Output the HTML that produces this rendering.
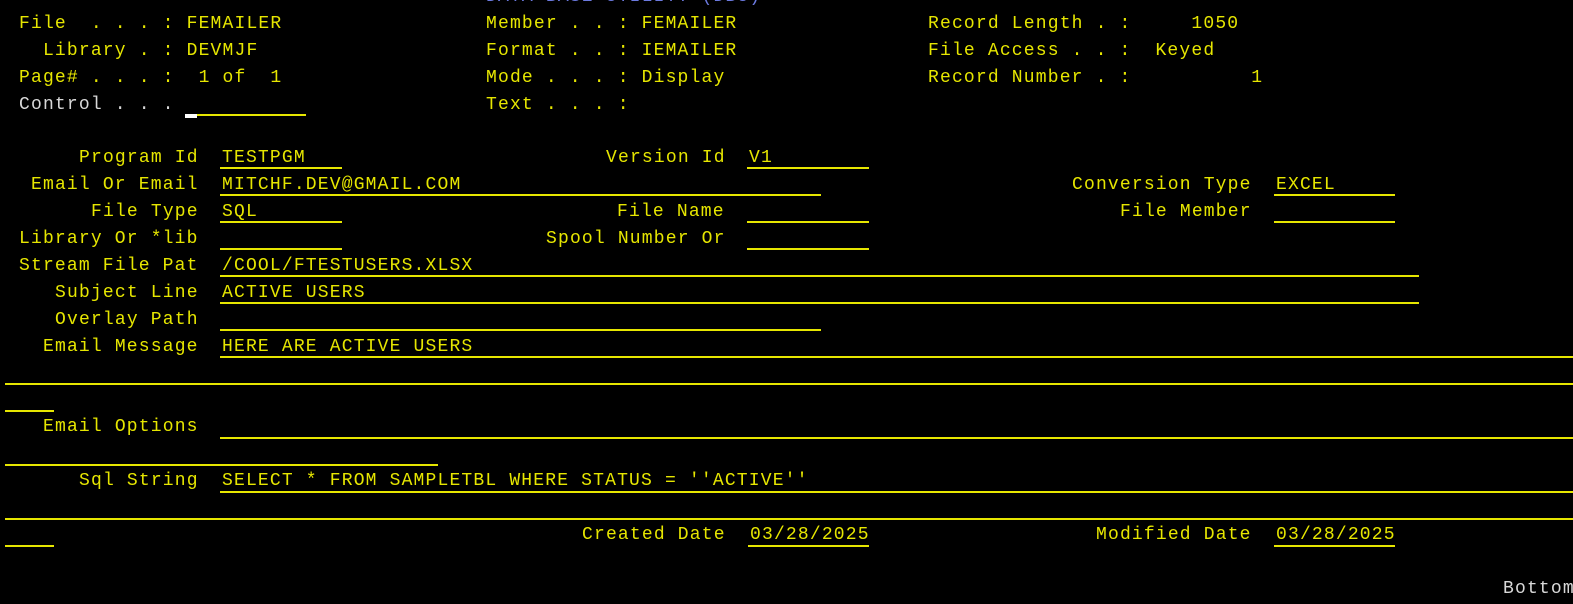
<!DOCTYPE html>
<html><head><meta charset="utf-8"><style>
html,body{margin:0;padding:0;background:#000;width:1573px;height:604px;overflow:hidden}
.t{position:absolute;height:27px;line-height:27px;font-family:"Liberation Mono","DejaVu Sans Mono",monospace;font-size:18px;letter-spacing:1.17px;color:#e6e600;white-space:pre;margin-left:2px}
.w{color:#d8d8d8}
.b{color:#6c7ae0}
.u{position:absolute;height:2px;background:#e6e600}
</style></head><body>
<div class="t b" style="left:484px;top:-16px">DATA BASE UTILITY (DBU)</div>

<div class="t" style="left:17px;top:11px">File  . . . : FEMAILER</div>
<div class="t" style="left:484px;top:11px">Member . . : FEMAILER</div>
<div class="t" style="left:926px;top:11px">Record Length . :     1050</div>

<div class="t" style="left:17px;top:38px">  Library . : DEVMJF</div>
<div class="t" style="left:484px;top:38px">Format . . : IEMAILER</div>
<div class="t" style="left:926px;top:38px">File Access . . :  Keyed</div>

<div class="t" style="left:17px;top:65px">Page# . . . :  1 of  1</div>
<div class="t" style="left:484px;top:65px">Mode . . . : Display</div>
<div class="t" style="left:926px;top:65px">Record Number . :          1</div>

<div class="t w" style="left:17px;top:92px">Control . . .</div>
<div class="t" style="left:484px;top:92px">Text . . . :</div>
<div class="u" style="left:185px;top:114px;width:121px"></div>
<div class="u" style="left:185px;top:114px;width:12px;height:4px;background:#fff"></div>

<div class="t" style="left:77px;top:145px">Program Id</div>
<div class="t" style="left:220px;top:145px">TESTPGM</div>
<div class="u" style="left:220px;top:167px;width:122px"></div>
<div class="t" style="left:604px;top:145px">Version Id</div>
<div class="t" style="left:747px;top:145px">V1</div>
<div class="u" style="left:747px;top:167px;width:122px"></div>

<div class="t" style="left:29px;top:172px">Email Or Email</div>
<div class="t" style="left:220px;top:172px">MITCHF.DEV@GMAIL.COM</div>
<div class="u" style="left:220px;top:194px;width:601px"></div>
<div class="t" style="left:1070px;top:172px">Conversion Type</div>
<div class="t" style="left:1274px;top:172px">EXCEL</div>
<div class="u" style="left:1274px;top:194px;width:121px"></div>

<div class="t" style="left:89px;top:199px">File Type</div>
<div class="t" style="left:220px;top:199px">SQL</div>
<div class="u" style="left:220px;top:221px;width:122px"></div>
<div class="t" style="left:615px;top:199px">File Name</div>
<div class="u" style="left:747px;top:221px;width:122px"></div>
<div class="t" style="left:1118px;top:199px">File Member</div>
<div class="u" style="left:1274px;top:221px;width:121px"></div>

<div class="t" style="left:17px;top:226px">Library Or *lib</div>
<div class="u" style="left:220px;top:248px;width:122px"></div>
<div class="t" style="left:544px;top:226px">Spool Number Or</div>
<div class="u" style="left:747px;top:248px;width:122px"></div>

<div class="t" style="left:17px;top:253px">Stream File Pat</div>
<div class="t" style="left:220px;top:253px">/COOL/FTESTUSERS.XLSX</div>
<div class="u" style="left:220px;top:275px;width:1199px"></div>

<div class="t" style="left:53px;top:280px">Subject Line</div>
<div class="t" style="left:220px;top:280px">ACTIVE USERS</div>
<div class="u" style="left:220px;top:302px;width:1199px"></div>

<div class="t" style="left:53px;top:307px">Overlay Path</div>
<div class="u" style="left:220px;top:329px;width:601px"></div>

<div class="t" style="left:41px;top:334px">Email Message</div>
<div class="t" style="left:220px;top:334px">HERE ARE ACTIVE USERS</div>
<div class="u" style="left:220px;top:356px;width:1353px"></div>

<div class="u" style="left:5px;top:383px;width:1568px"></div>
<div class="u" style="left:5px;top:410px;width:49px"></div>

<div class="t" style="left:41px;top:414px">Email Options</div>
<div class="u" style="left:220px;top:437px;width:1353px"></div>

<div class="u" style="left:5px;top:464px;width:433px"></div>

<div class="t" style="left:77px;top:468px">Sql String</div>
<div class="t" style="left:220px;top:468px">SELECT * FROM SAMPLETBL WHERE STATUS = ''ACTIVE''</div>
<div class="u" style="left:220px;top:491px;width:1353px"></div>

<div class="u" style="left:5px;top:518px;width:1568px"></div>

<div class="t" style="left:580px;top:522px">Created Date</div>
<div class="t" style="left:748px;top:522px">03/28/2025</div>
<div class="u" style="left:748px;top:545px;width:121px"></div>
<div class="t" style="left:1094px;top:522px">Modified Date</div>
<div class="t" style="left:1274px;top:522px">03/28/2025</div>
<div class="u" style="left:1274px;top:545px;width:121px"></div>
<div class="u" style="left:5px;top:545px;width:49px"></div>

<div class="t w" style="left:1501px;top:576px">Bottom</div>
</body></html>
